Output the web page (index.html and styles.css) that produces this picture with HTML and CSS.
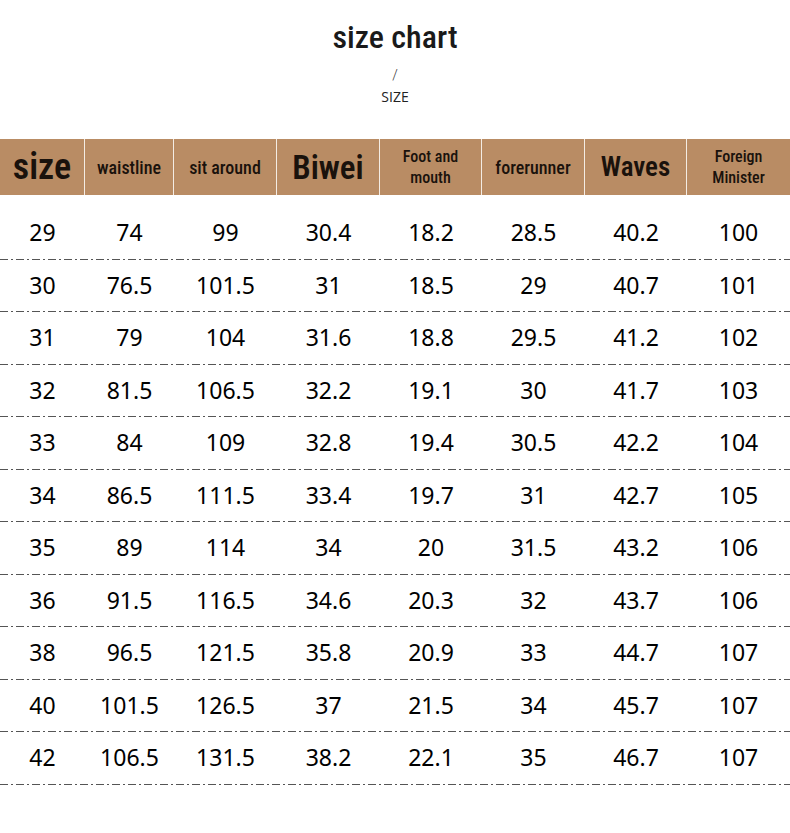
FILE: index.html
```html
<!DOCTYPE html>
<html>
<head>
<meta charset="utf-8">
<link rel="stylesheet" href="styles.css">
</head>
<body>
<div class="page">
  <div class="title">size chart</div>
  <div class="slash">/</div>
  <div class="sub">SIZE</div>
  <div class="head">
    <div class="hc big">size</div>
    <div class="hc">waistline</div>
    <div class="hc">sit around</div>
    <div class="hc big2">Biwei</div>
    <div class="hc sm">Foot and<br>mouth</div>
    <div class="hc">forerunner</div>
    <div class="hc mid">Waves</div>
    <div class="hc sm">Foreign<br>Minister</div>
  </div>
  <div class="rows" id="rows">
    <div class="row"><span>29</span><span>74</span><span>99</span><span>30.4</span><span>18.2</span><span>28.5</span><span>40.2</span><span>100</span></div>
    <div class="row"><span>30</span><span>76.5</span><span>101.5</span><span>31</span><span>18.5</span><span>29</span><span>40.7</span><span>101</span></div>
    <div class="row"><span>31</span><span>79</span><span>104</span><span>31.6</span><span>18.8</span><span>29.5</span><span>41.2</span><span>102</span></div>
    <div class="row"><span>32</span><span>81.5</span><span>106.5</span><span>32.2</span><span>19.1</span><span>30</span><span>41.7</span><span>103</span></div>
    <div class="row"><span>33</span><span>84</span><span>109</span><span>32.8</span><span>19.4</span><span>30.5</span><span>42.2</span><span>104</span></div>
    <div class="row"><span>34</span><span>86.5</span><span>111.5</span><span>33.4</span><span>19.7</span><span>31</span><span>42.7</span><span>105</span></div>
    <div class="row"><span>35</span><span>89</span><span>114</span><span>34</span><span>20</span><span>31.5</span><span>43.2</span><span>106</span></div>
    <div class="row"><span>36</span><span>91.5</span><span>116.5</span><span>34.6</span><span>20.3</span><span>32</span><span>43.7</span><span>106</span></div>
    <div class="row"><span>38</span><span>96.5</span><span>121.5</span><span>35.8</span><span>20.9</span><span>33</span><span>44.7</span><span>107</span></div>
    <div class="row"><span>40</span><span>101.5</span><span>126.5</span><span>37</span><span>21.5</span><span>34</span><span>45.7</span><span>107</span></div>
    <div class="row"><span>42</span><span>106.5</span><span>131.5</span><span>38.2</span><span>22.1</span><span>35</span><span>46.7</span><span>107</span></div>
  </div>
</div>
</body>
</html>
```
FILE: styles.css
```css
html, body {
  margin: 0;
  padding: 0;
  background: #ffffff;
}
.page {
  width: 790px;
  height: 833px;
  overflow: hidden;
}
.title {
  font-family: "Roboto Condensed", "Liberation Sans Narrow", "DejaVu Sans Condensed", sans-serif;
  font-weight: 500;
  font-size: 32px;
  color: #1a1a1a;
  text-align: center;
  padding-top: 17px;
  height: 40px;
  line-height: 40px;
}
.slash {
  font-family: "Roboto", sans-serif;
  font-weight: 300;
  font-size: 14px;
  color: #333;
  text-align: center;
  margin-top: 9px;
  line-height: 18px;
}
.sub {
  font-family: "Open Sans", sans-serif;
  font-weight: 500;
  font-size: 14px;
  color: #222;
  text-align: center;
  line-height: 18px;
  margin-top: 4px;
}
.head {
  margin-top: 33px;
  display: grid;
  grid-template-columns: 84px 88px 102px 102px 101px 102px 101px 1fr;
  column-gap: 1px;
  background: #f4ece4;
  height: 56px;
}
.hc {
  background: #b98c64;
  display: flex;
  align-items: center;
  justify-content: center;
  text-align: center;
  font-family: "Roboto Condensed", "Liberation Sans Narrow", "DejaVu Sans Condensed", sans-serif;
  font-weight: 500;
  font-size: 18px;
  color: #1a120c;
  line-height: 21px;
}
.hc.big {
  font-size: 36px;
  font-weight: 600;
}
.hc.big2 {
  font-size: 33px;
  font-weight: 600;
}
.hc.mid {
  font-size: 27px;
  font-weight: 600;
}
.hc.sm {
  font-size: 16px;
  font-weight: 500;
}
.rows {
  margin-top: 12px;
}
.row {
  display: grid;
  grid-template-columns: 85px 89px 103px 103px 102px 103px 102px 1fr;
  height: 52.5px;
  align-items: center;
  box-sizing: border-box;
  padding-bottom: 2px;
  background-image: repeating-linear-gradient(90deg, #555 0 8px, transparent 8px 11px, #555 11px 13px, transparent 13px 16px);
  background-size: 100% 1px;
  background-repeat: no-repeat;
  background-position: 0 100%;
}
.row span {
  text-align: center;
  font-family: "Noto Sans", "Open Sans", sans-serif;
  font-size: 23px;
  color: #000;
}
```
